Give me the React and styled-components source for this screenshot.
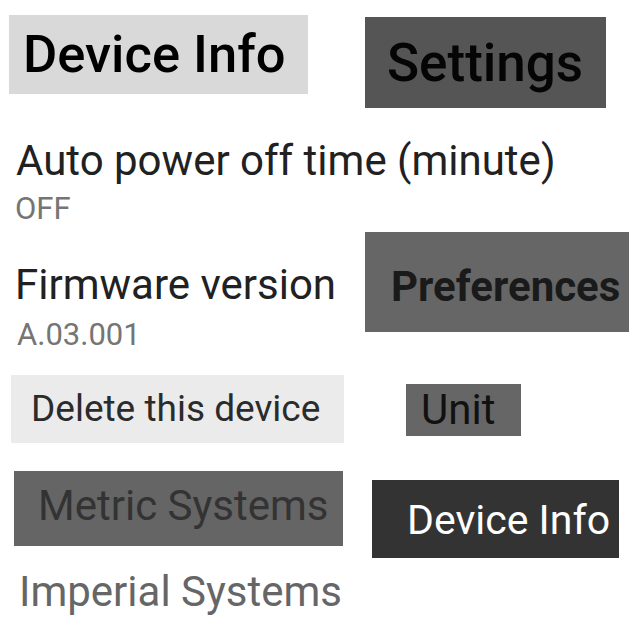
import React from "react";
import styled, { createGlobalStyle } from "styled-components";

const GlobalStyle = createGlobalStyle`
  html, body {
    margin: 0;
    padding: 0;
    background: #fff;
  }
  body {
    font-family: Roboto, "Noto Sans", "Liberation Sans", sans-serif;
    width: 640px;
    height: 640px;
    overflow: hidden;
  }
`;

const Page = styled.div`
  display: flex;
  width: 640px;
  height: 640px;
`;

const Column = styled.div`
  display: flex;
  flex-direction: column;
  align-items: flex-start;
  width: ${(p) => p.$width}px;
`;

// a grey block with one label in it
const Tag = styled.div`
  box-sizing: border-box;
  width: ${(p) => p.$w}px;
  height: ${(p) => p.$h}px;
  margin: ${(p) => p.$mt}px 0 0 ${(p) => p.$ml}px;
  padding: ${(p) => p.$pt || 0}px 0 0 ${(p) => p.$pl}px;
  background: ${(p) => p.$bg};
  color: ${(p) => p.$color};
  font-size: ${(p) => p.$size}px;
  font-weight: ${(p) => p.$weight || 400};
  line-height: ${(p) => p.$lh}px;
  white-space: nowrap;
  overflow: hidden;
`;

const Title = styled.div`
  margin: ${(p) => p.$mt}px 0 0 ${(p) => p.$ml}px;
  font-size: ${(p) => p.$size || 42}px;
  line-height: ${(p) => p.$lh || 50}px;
  color: ${(p) => p.$color || "#212121"};
  white-space: nowrap;
`;

const Value = styled.div`
  margin: ${(p) => p.$mt}px 0 0 ${(p) => p.$ml}px;
  font-size: 31px;
  line-height: 36px;
  color: #757575;
  white-space: nowrap;
`;

export default function App() {
  return (
    <>
      <GlobalStyle />
      <Page>
        <Column $width={360}>
          <Tag $w={299} $h={79} $mt={15} $ml={9} $pl={14} $lh={79} $bg="#d9d9d9" $color="#000" $size={52.5} $weight={500}>
            Device Info
          </Tag>
          <Title $mt={42} $ml={16}>Auto power off time (minute)</Title>
          <Value $mt={5} $ml={15}>OFF</Value>
          <Title $mt={33} $ml={15}>Firmware version</Title>
          <Value $mt={7} $ml={17}>A.03.001</Value>
          <Tag $w={333} $h={68} $mt={22} $ml={11} $pl={20} $lh={68} $bg="#ebebeb" $color="#2b2b2b" $size={37}>
            Delete this device
          </Tag>
          <Tag $w={329} $h={75} $mt={28} $ml={14} $pl={24} $lh={70} $bg="#656565" $color="#333" $size={42}>
            Metric Systems
          </Tag>
          <Title $mt={21} $ml={19} $color="#666">Imperial Systems</Title>
        </Column>
        <Column $width={280}>
          <Tag $w={241} $h={91} $mt={17} $ml={5} $pl={22} $pt={2} $lh={89} $bg="#555" $color="#050505" $size={53} $weight={500}>
            Settings
          </Tag>
          <Tag $w={264} $h={100} $mt={124} $ml={5} $pl={26} $pt={10} $lh={90} $bg="#666" $color="#1a1a1a" $size={42} $weight={700}>
            Preferences
          </Tag>
          <Tag $w={115} $h={52} $mt={52} $ml={46} $pl={15} $lh={52} $bg="#666" $color="#111" $size={42}>
            Unit
          </Tag>
          <Tag $w={247} $h={78} $mt={44} $ml={12} $pl={35} $pt={3} $lh={75} $bg="#333" $color="#fff" $size={41}>
            Device Info
          </Tag>
        </Column>
      </Page>
    </>
  );
}
